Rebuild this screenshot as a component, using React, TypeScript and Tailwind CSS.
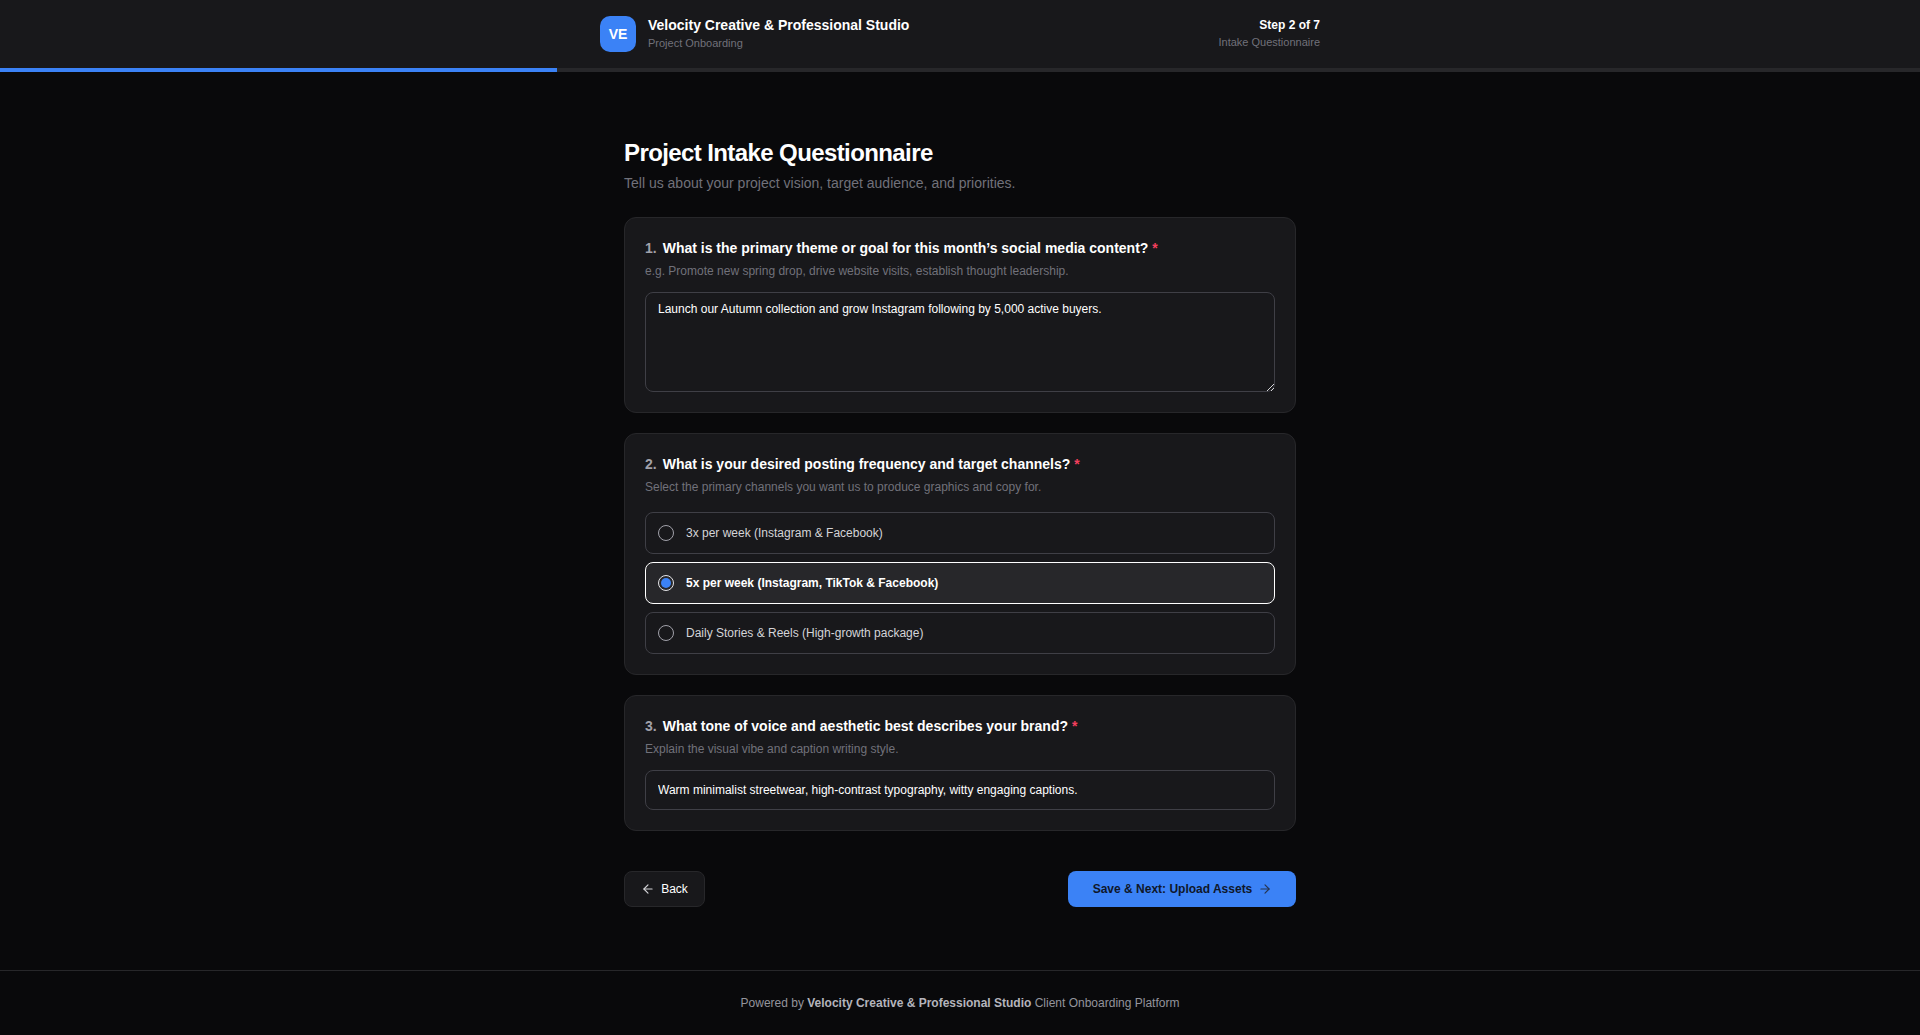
import { ArrowLeft, ArrowRight } from 'lucide-react';

const channelOptions = [
    { id: 'three', label: '3x per week (Instagram & Facebook)', selected: false },
    { id: 'five', label: '5x per week (Instagram, TikTok & Facebook)', selected: true },
    { id: 'daily', label: 'Daily Stories & Reels (High-growth package)', selected: false },
];

function QuestionHead({ num, title, hint }: { num: number; title: string; hint: string }) {
    return (
        <>
            <label className="flex items-center text-sm font-bold leading-5 text-white">
                <span className="mr-1.5 text-[#a1a1aa]">{num}.</span>
                {title}
                <span className="ml-1 text-[#f43f5e]">*</span>
            </label>
            <p className="mt-[5px] mb-[13px] text-xs leading-4 text-[#71717a]">{hint}</p>
        </>
    );
}

export default function App() {
    return (
        <div className="flex min-h-screen flex-col bg-[#09090b] font-['Liberation_Sans',Arial,sans-serif]">
            <header className="h-[68px] bg-[#18181b]">
                <div className="mx-auto flex h-full max-w-3xl items-center justify-between px-6">
                    <div className="flex items-center gap-3">
                        <div className="flex h-9 w-9 items-center justify-center rounded-[10px] bg-[#3b82f6] text-sm font-bold text-white">
                            VE
                        </div>
                        <div className="pb-0.5">
                            <div className="text-sm font-bold leading-5 text-white">Velocity Creative &amp; Professional Studio</div>
                            <div className="text-[11px] leading-4 text-[#71717a]">Project Onboarding</div>
                        </div>
                    </div>
                    <div className="pb-px text-right">
                        <div className="mb-px text-xs font-bold leading-4 text-white">Step 2 of 7</div>
                        <div className="text-[11px] leading-4 text-[#71717a]">Intake Questionnaire</div>
                    </div>
                </div>
            </header>
            <div className="h-1 bg-[#27272a]">
                <div className="h-full w-[29%] bg-[#3b82f6]"></div>
            </div>

            <main className="mx-auto w-full max-w-2xl flex-1 pt-[65px]">
                <h1 className="text-2xl font-bold leading-8 tracking-tight text-white">Project Intake Questionnaire</h1>
                <p className="mt-1 text-sm leading-5 text-[#71717a]">Tell us about your project vision, target audience, and priorities.</p>

                <div className="mt-6 flex flex-col gap-5">
                    <section className="rounded-xl border border-[#27272a] bg-[#18181b] p-5">
                        <QuestionHead
                            num={1}
                            title="What is the primary theme or goal for this month’s social media content?"
                            hint="e.g. Promote new spring drop, drive website visits, establish thought leadership."
                        />
                        <div className="relative">
                            <textarea
                                className="block h-[100px] w-full resize-none rounded-lg border border-[#3f3f46] bg-[#18181b] px-3 py-2 text-xs leading-4 text-white outline-none"
                                defaultValue="Launch our Autumn collection and grow Instagram following by 5,000 active buyers."
                            />
                            {/* resize grip */}
                            <svg className="pointer-events-none absolute right-0 bottom-0" width="10" height="10" viewBox="0 0 10 10" fill="none" stroke="#d4d4d8" strokeWidth="1">
                                <path d="M2 9 9 2M6 9 9 6" />
                            </svg>
                        </div>
                    </section>

                    <section className="rounded-xl border border-[#27272a] bg-[#18181b] p-5">
                        <QuestionHead
                            num={2}
                            title="What is your desired posting frequency and target channels?"
                            hint="Select the primary channels you want us to produce graphics and copy for."
                        />
                        <div className="mt-[17px] flex flex-col gap-2">
                            {channelOptions.map((opt) => (
                                <div
                                    key={opt.id}
                                    className={
                                        opt.selected
                                            ? 'flex h-[42px] items-center gap-3 rounded-lg border border-white bg-[#27272a] px-3 text-xs font-bold text-white'
                                            : 'flex h-[42px] items-center gap-3 rounded-lg border border-[#3f3f46] px-3 text-xs text-[#d4d4d8]'
                                    }
                                >
                                    <span
                                        className={
                                            opt.selected
                                                ? 'flex h-4 w-4 items-center justify-center rounded-full border border-[#e4e4e7]'
                                                : 'flex h-4 w-4 items-center justify-center rounded-full border border-[#a1a1aa]'
                                        }
                                    >
                                        {opt.selected && <span className="h-2.5 w-2.5 rounded-full bg-[#3b82f6]"></span>}
                                    </span>
                                    {opt.label}
                                </div>
                            ))}
                        </div>
                    </section>

                    <section className="rounded-xl border border-[#27272a] bg-[#18181b] p-5">
                        <QuestionHead
                            num={3}
                            title="What tone of voice and aesthetic best describes your brand?"
                            hint="Explain the visual vibe and caption writing style."
                        />
                        <input
                            className="block h-10 w-full rounded-lg border border-[#3f3f46] bg-[#18181b] px-3 text-xs text-white outline-none"
                            defaultValue="Warm minimalist streetwear, high-contrast typography, witty engaging captions."
                        />
                    </section>
                </div>

                <div className="mt-10 flex items-center justify-between">
                    <button className="flex h-9 w-[81px] items-center justify-center gap-1.5 rounded-lg border border-[#27272a] bg-[#18181b] text-xs text-white">
                        <ArrowLeft size={14} className="text-[#d4d4d8]" />
                        Back
                    </button>
                    <button className="flex h-9 w-[228px] items-center justify-center gap-1.5 rounded-lg bg-[#3b82f6] pl-px text-xs font-bold text-[#0f172a]">
                        Save &amp; Next: Upload Assets
                        <ArrowRight size={14} className="text-[#27344f]" />
                    </button>
                </div>
            </main>

            <footer className="border-t border-[#27272a] py-6 text-center text-xs leading-4 text-[#94949c]">
                Powered by <span className="font-bold text-[#b4b4bc]">Velocity Creative &amp; Professional Studio</span> Client Onboarding Platform
            </footer>
        </div>
    );
}
